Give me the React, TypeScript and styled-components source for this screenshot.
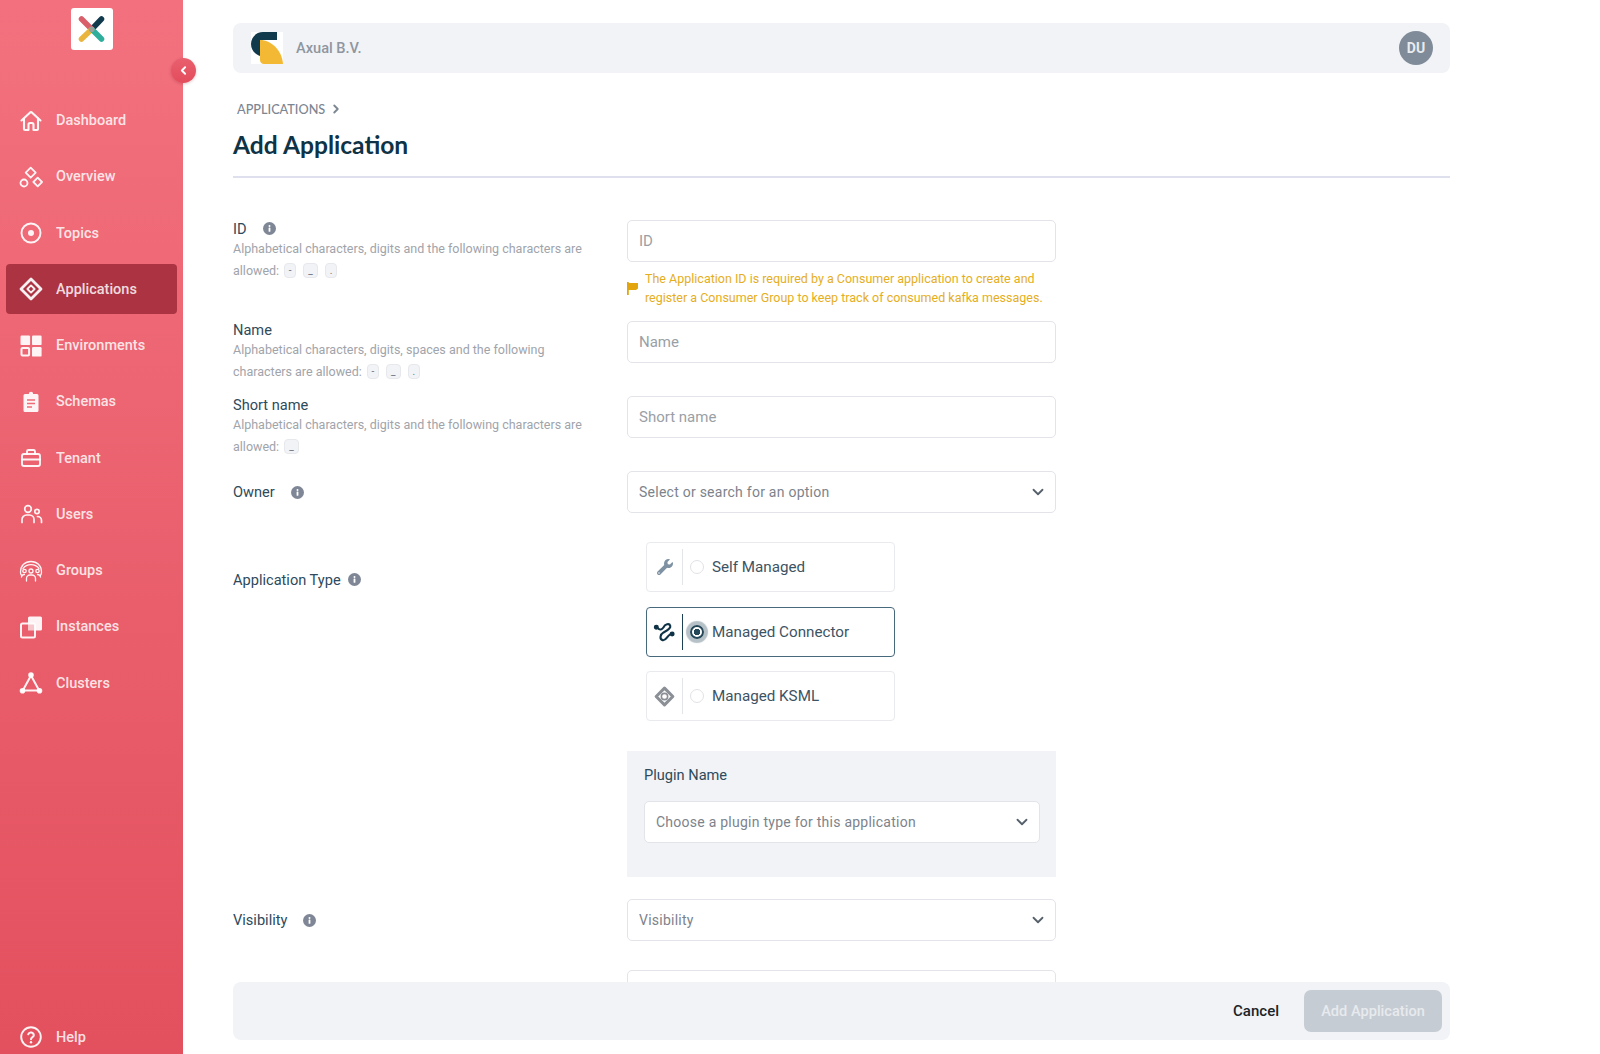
import React from "react";
import styled, { createGlobalStyle } from "styled-components";
import { ChevronDown, ChevronLeft, ChevronRight } from "lucide-react";
import { FaWrench } from "react-icons/fa";

const strokeProps = {
  fill: "none",
  stroke: "currentColor",
  strokeWidth: 1.9,
  strokeLinecap: "round" as const,
  strokeLinejoin: "round" as const,
};

const navIcons: Record<string, React.ReactNode> = {
  Dashboard: (
    <g {...strokeProps} strokeWidth={2.1}>
      <path d="M2.5 11.5 10.6 3.9a2 2 0 0 1 2.8 0l8.1 7.6" />
      <path d="M5 9.500V20a1 1 0 0 0 1 1h3.500v-5.500a1.500 1.500 0 0 1 1.500-1.500h2a1.500 1.500 0 0 1 1.500 1.500V21H18a1 1 0 0 0 1-1V9.500" />
    </g>
  ),
  Overview: (
    <g {...strokeProps} strokeWidth={1.8}>
      <path d="m11.700 2.700 5 5-5 5-5-5z" />
      <circle cx="5" cy="18" r="3.500" />
      <path d="m18.700 12.700 4.300 4.300-4.300 4.300-4.300-4.300z" />
    </g>
  ),
  Topics: (
    <g>
      <circle cx="12" cy="12" r="9.500" {...strokeProps} />
      <circle cx="12" cy="12" r="3" fill="currentColor" />
    </g>
  ),
  Applications: (
    <g {...strokeProps} strokeWidth={2.8}>
      <path d="M12 2 22 12 12 22 2 12z" />
      <path d="m12 8.400 3.600 3.600-3.600 3.600L8.400 12z" strokeWidth={1.9} />
    </g>
  ),
  Environments: (
    <g fill="currentColor">
      <rect x="1.500" y="1.500" width="9.600" height="9.600" rx="1.200" />
      <rect x="13" y="1.500" width="9.600" height="9.600" rx="1.200" />
      <rect x="2.500" y="14" width="7.600" height="7.600" rx="1" fill="none" stroke="currentColor" strokeWidth={2} />
      <rect x="13" y="13" width="9.600" height="9.600" rx="1.200" />
    </g>
  ),
  Schemas: (
    <g>
      <path
        fill="currentColor"
        d="M9.800 4a2.200 2.200 0 0 1 4.400 0H18a1.500 1.500 0 0 1 1.500 1.500v15A1.500 1.500 0 0 1 18 22H6a1.500 1.500 0 0 1-1.500-1.500v-15A1.500 1.500 0 0 1 6 4z"
      />
      <path d="M8 10h8M8 13.500h8M8 17h5" stroke="#ee6a77" strokeWidth={1.500} />
    </g>
  ),
  Tenant: (
    <g {...strokeProps}>
      <rect x="3" y="8" width="18" height="12" rx="2" />
      <path d="M8 8V5.500A1.500 1.500 0 0 1 9.500 4h5A1.500 1.500 0 0 1 16 5.500V8M3 13.500h18M10 13.500h4" />
    </g>
  ),
  Users: (
    <g {...strokeProps} strokeWidth={1.7}>
      <circle cx="9" cy="7" r="3.300" />
      <path d="M3 20.500v-3a4.500 4.500 0 0 1 4.500-4.500h3a4.500 4.500 0 0 1 4.500 4.500v3" />
      <circle cx="18" cy="9.500" r="2.200" />
      <path d="M18.500 14.500a4 4 0 0 1 4 4v2" />
    </g>
  ),
  Groups: (
    <g {...strokeProps} strokeWidth={1.300}>
      <path d="M1.500 13C1.500 6.500 6 2.500 12 2.500S22.500 6.500 22.500 13a5 5 0 0 1-1 3.300M2.500 16.300a5 5 0 0 1-1-3.300" />
      <path d="M4 9.500c2-2.600 4.700-3.800 8-3.800s6 1.200 8 3.800" />
      <circle cx="12" cy="12" r="2" />
      <circle cx="5.500" cy="12" r="1.700" />
      <circle cx="18.500" cy="12" r="1.700" />
      <path d="M7.500 22v-2.500a3.500 3.500 0 0 1 3.500-3.500h2a3.500 3.500 0 0 1 3.500 3.500V22M2.500 18a3 3 0 0 1 3-2.500M21.500 18a3 3 0 0 0-3-2.500" />
    </g>
  ),
  Instances: (
    <g>
      <rect x="9" y="1.500" width="14" height="14" rx="1.500" fill="currentColor" />
      <rect x="2" y="8.500" width="14" height="14" rx="1.500" fill="#ea5f6d" stroke="currentColor" strokeWidth={2} />
      <rect x="9" y="8.500" width="7" height="7" fill="currentColor" opacity={0.7} />
    </g>
  ),
  Clusters: (
    <g {...strokeProps} strokeWidth={2}>
      <path d="M12 4.500 3.800 19.500h16.400z" />
      <circle cx="12" cy="4" r="1.800" fill="currentColor" />
      <circle cx="3.500" cy="19.800" r="1.800" fill="currentColor" />
      <circle cx="20.500" cy="19.800" r="1.800" fill="currentColor" />
    </g>
  ),
  Help: (
    <g>
      <circle cx="12" cy="12" r="9.800" {...strokeProps} />
      <path d="M9.200 9.300a2.900 2.900 0 0 1 5.600.9c0 1.900-2.800 2.300-2.800 4" {...strokeProps} strokeWidth={2} />
      <circle cx="12" cy="17.200" r="1.200" fill="currentColor" />
    </g>
  ),
};

const navItems = [
  "Dashboard",
  "Overview",
  "Topics",
  "Applications",
  "Environments",
  "Schemas",
  "Tenant",
  "Users",
  "Groups",
  "Instances",
  "Clusters",
];

const InfoIcon = ({ tight }: { tight?: boolean }) => (
  <InfoDot $tight={tight}>
    <svg viewBox="0 0 13 13" width="13" height="13">
      <circle cx="6.500" cy="6.500" r="6.500" fill="#7f8796" />
      <circle cx="6.500" cy="3.900" r="1" fill="#fff" />
      <rect x="5.600" y="5.600" width="1.800" height="4.200" rx="0.500" fill="#fff" />
    </svg>
  </InfoDot>
);

const Hint = ({ first, last, chips }: { first: string; last: string; chips: string[] }) => (
  <>
    <HintLine>{first}</HintLine>
    <HintLine>
      {last}
      {chips.map((chip) => (
        <Chip key={chip} $wide={chip === "_"}>
          {chip}
        </Chip>
      ))}
    </HintLine>
  </>
);

const SelectBox = ({ text }: { text: string }) => (
  <Select>
    <span>{text}</span>
    <ChevronDown size={18} strokeWidth={2.4} color="#55606b" />
  </Select>
);

const App = () => {
  return (
    <Page>
      <GlobalStyle />
      <Sidebar>
        <LogoBox>
          <svg viewBox="0 0 42 42" width="42" height="42">
            <g strokeWidth="5.500" strokeLinecap="round">
              <line x1="30.500" y1="11" x2="21" y2="21" stroke="#123a4d" />
              <line x1="10.500" y1="11" x2="20.500" y2="21" stroke="#d95f6a" />
              <line x1="10.500" y1="31" x2="20" y2="22" stroke="#eab53f" />
              <line x1="30.500" y1="31" x2="21.500" y2="22" stroke="#2fae9c" />
            </g>
            <circle cx="20.700" cy="21.200" r="2.800" fill="#9a9f98" />
          </svg>
        </LogoBox>
        <Collapse>
          <ChevronLeft size={13} strokeWidth={3.5} color="#fff" />
        </Collapse>
        <Nav>
          {navItems.map((item) => (
            <NavItem key={item} $active={item === "Applications"}>
              <NavIcon viewBox="0 0 24 24">{navIcons[item]}</NavIcon>
              {item}
            </NavItem>
          ))}
        </Nav>
        <HelpItem>
          <NavIcon viewBox="0 0 24 24">{navIcons.Help}</NavIcon>
          Help
        </HelpItem>
      </Sidebar>

      <Main>
        <TopBar>
          <OrgLogo viewBox="0 0 32 32">
            <rect width="32" height="32" fill="#fff" />
            <path d="M26 0H12C5 0 0 5.500 0 12c0 5.500 3.500 10 9 12V8h17z" fill="#123a4d" />
            <path d="M9 8c11 0 22 10 23 24H13c-2.500 0-4-2-4-4z" fill="#f3b935" />
          </OrgLogo>
          <OrgName>Axual B.V.</OrgName>
          <Avatar>DU</Avatar>
        </TopBar>

        <Breadcrumb>
          APPLICATIONS
          <ChevronRight size={14} strokeWidth={3.2} color="#7c8692" />
        </Breadcrumb>
        <Title>Add Application</Title>
        <Divider />

        <FormRow $height={101}>
          <div>
            <Label>
              ID <InfoIcon />
            </Label>
            <Hint
              first="Alphabetical characters, digits and the following characters are"
              last="allowed:"
              chips={["-", "_", "."]}
            />
          </div>
          <div>
            <TextInput>ID</TextInput>
            <Warning>
              <svg viewBox="0 0 11 13" width="11" height="13">
                <path d="M0 0h1.800v13H0zM1.800 1H11v5.500l-2 1.500H1.800z" fill="#e2a50e" />
              </svg>
              <span>
                The Application ID is required by a Consumer application to create and register a Consumer Group to keep
                track of consumed kafka messages.
              </span>
            </Warning>
          </div>
        </FormRow>

        <FormRow $height={75}>
          <div>
            <Label>Name</Label>
            <Hint
              first="Alphabetical characters, digits, spaces and the following"
              last="characters are allowed:"
              chips={["-", "_", "."]}
            />
          </div>
          <TextInput>Name</TextInput>
        </FormRow>

        <FormRow $height={75}>
          <div>
            <Label>Short name</Label>
            <Hint
              first="Alphabetical characters, digits and the following characters are"
              last="allowed:"
              chips={["_"]}
            />
          </div>
          <TextInput>Short name</TextInput>
        </FormRow>

        <FormRow $height={71}>
          <CenteredLabel>
            Owner <InfoIcon />
          </CenteredLabel>
          <SelectBox text="Select or search for an option" />
        </FormRow>

        <FormRow $height={209}>
          <TypeLabel>
            Application Type <InfoIcon tight />
          </TypeLabel>
          <TypeList>
            <TypeCard>
              <TypeIcon>
                <FaWrench size={16} color="#7e92a3" />
              </TypeIcon>
              <Radio />
              Self Managed
            </TypeCard>
            <TypeCard $selected>
              <TypeIcon $selected>
                <svg viewBox="0 0 24 24" width="23" height="23" fill="none" stroke="#0f3346" strokeWidth="2.200" strokeLinecap="round">
                  <path d="M5 8.500C7 11 9.500 10 11 7.500 12.500 4.500 17 3 18 6 19 9 14 11.500 11 13 7.500 15 6.500 20 10 21 14 22 14.500 16.500 18 15" />
                  <circle cx="3.500" cy="7.500" r="1.500" fill="#0f3346" />
                  <circle cx="20" cy="14.500" r="1.500" fill="#0f3346" />
                </svg>
              </TypeIcon>
              <Radio $selected />
              Managed Connector
            </TypeCard>
            <TypeCard>
              <TypeIcon>
                <svg viewBox="0 0 24 24" width="21" height="21" fill="none" stroke="#8b8f96">
                  <path d="M12 2.500 21.500 12 12 21.500 2.500 12z" strokeWidth="3.500" strokeLinejoin="round" />
                  <circle cx="12" cy="12" r="3.600" strokeWidth="1.800" />
                </svg>
              </TypeIcon>
              <Radio />
              Managed KSML
            </TypeCard>
          </TypeList>
        </FormRow>

        <FormRow $height={148}>
          <span />
          <PluginPanel>
            <PanelLabel>Plugin Name</PanelLabel>
            <SelectBox text="Choose a plugin type for this application" />
          </PluginPanel>
        </FormRow>

        <FormRow $height={71}>
          <CenteredLabel>
            Visibility <InfoIcon />
          </CenteredLabel>
          <SelectBox text="Visibility" />
        </FormRow>

        <FormRow $height={42}>
          <span />
          <TextInput />
        </FormRow>

        <Footer>
          <CancelButton>Cancel</CancelButton>
          <SubmitButton disabled>Add Application</SubmitButton>
        </Footer>
      </Main>
    </Page>
  );
};

export default App;

const GlobalStyle = createGlobalStyle`
  html, body {
    margin: 0;
    padding: 0;
    height: 100%;
    overflow: hidden;
    background: #ffffff;
  }
  body {
    font-family: Roboto, "Liberation Sans", sans-serif;
  }
`;

const Page = styled.div`
  display: flex;
  height: 1054px;
  overflow: hidden;
`;

const Sidebar = styled.aside`
  position: relative;
  display: flex;
  flex-direction: column;
  flex: 0 0 183px;
  padding-bottom: 2px;
  box-sizing: border-box;
  background: linear-gradient(180deg, #f3717e 0%, #e3505e 100%);
  color: rgba(255, 255, 255, 0.84);
`;

const LogoBox = styled.div`
  align-self: center;
  width: 42px;
  height: 42px;
  margin-top: 8px;
  border-radius: 3px;
  background: #ffffff;
`;

const Collapse = styled.div`
  position: absolute;
  top: 58px;
  right: -13px;
  display: flex;
  align-items: center;
  justify-content: center;
  width: 25px;
  height: 25px;
  border-radius: 50%;
  background: linear-gradient(180deg, #e9606e, #e34c5c);
  box-shadow: 0 1px 3px rgba(120, 30, 40, 0.25);
`;

const Nav = styled.nav`
  display: flex;
  flex-direction: column;
  gap: 6.250px;
  margin-top: 45.500px;
  padding: 0 6px;
`;

const NavItem = styled.div<{ $active?: boolean }>`
  display: flex;
  align-items: center;
  gap: 13px;
  height: 50px;
  padding-left: 13px;
  border-radius: 4px;
  font-size: 14.500px;
  font-weight: 500;
  background: ${(p) => (p.$active ? "#ab3342" : "transparent")};
`;

const HelpItem = styled(NavItem)`
  margin: auto 6px 0;
  height: 30px;
`;

const NavIcon = styled.svg`
  flex: none;
  width: 24px;
  height: 24px;
  color: rgba(255, 255, 255, 0.93);
`;

const Main = styled.main`
  position: relative;
  flex: 0 0 1217px;
  margin-left: 50px;
  padding-top: 23px;
  box-sizing: border-box;
`;

const TopBar = styled.header`
  display: flex;
  align-items: center;
  height: 50px;
  padding: 0 17px 0 18px;
  border-radius: 8px;
  background: #f1f3f6;
`;

const OrgLogo = styled.svg`
  width: 32px;
  height: 32px;
`;

const OrgName = styled.span`
  margin-left: 13px;
  font-size: 14.600px;
  font-weight: 500;
  color: #8f96a0;
`;

const Avatar = styled.div`
  display: flex;
  align-items: center;
  justify-content: center;
  width: 34px;
  height: 34px;
  margin-left: auto;
  border-radius: 50%;
  font-size: 14px;
  font-weight: 700;
  color: #e8ecf0;
  background: #7f8b98;
`;

const Breadcrumb = styled.div`
  display: flex;
  align-items: center;
  gap: 4px;
  height: 18px;
  margin: 27px 0 0 4px;
  font-family: Lato, sans-serif;
  font-size: 12.700px;
  font-weight: 500;
  color: #7c8692;
`;

const Title = styled.h1`
  margin: 9px 0 0;
  font-family: Lato, sans-serif;
  font-size: 24.600px;
  line-height: 36px;
  font-weight: 700;
  color: #0f3346;
`;

const Divider = styled.div`
  height: 2px;
  margin: 13px 0 42px;
  background: #dfe0ee;
`;

const FormRow = styled.section<{ $height: number }>`
  display: grid;
  grid-template-columns: 394px 429px;
  height: ${(p) => p.$height}px;
`;

const Label = styled.div`
  display: flex;
  align-items: center;
  height: 17px;
  font-size: 14.600px;
  color: #2e4a5b;
`;

const CenteredLabel = styled(Label)`
  height: 42px;
`;

const TypeLabel = styled(Label)`
  margin-top: 29px;
`;

const InfoDot = styled.span<{ $tight?: boolean }>`
  display: inline-flex;
  margin-left: ${(p) => (p.$tight ? 7 : 16)}px;
`;

const HintLine = styled.div`
  display: flex;
  align-items: center;
  height: 22px;
  font-size: 12.500px;
  color: #9fa4ab;
`;

const Chip = styled.span<{ $wide?: boolean }>`
  width: ${(p) => (p.$wide ? 15 : 12)}px;
  height: 15px;
  margin-left: 5px;
  margin-right: 2px;
  border: 1px solid #e6e8ec;
  border-radius: 4px;
  box-sizing: border-box;
  font-size: 10px;
  line-height: 13px;
  text-align: center;
  color: #6f7680;
  background: #f2f3f6;
`;

const TextInput = styled.div`
  height: 42px;
  padding: 0 11px;
  border: 1px solid #e2e4e9;
  border-radius: 5px;
  box-sizing: border-box;
  font-size: 15px;
  line-height: 40px;
  color: #9a9fa6;
  background: #ffffff;
`;

const Select = styled(TextInput)`
  display: flex;
  align-items: center;
  justify-content: space-between;
  padding-right: 8px;
  font-size: 14px;
  letter-spacing: 0.25px;
  color: #7d838b;
`;

const Warning = styled.div`
  display: flex;
  align-items: center;
  gap: 7px;
  margin-top: 7px;
  font-size: 12.500px;
  line-height: 19px;
  color: #e5ae1c;

  svg {
    flex: none;
  }
`;

const TypeList = styled.div`
  display: flex;
  flex-direction: column;
  gap: 14.500px;
  margin-left: 19px;
  width: 249px;
`;

const TypeCard = styled.div<{ $selected?: boolean }>`
  display: flex;
  align-items: center;
  height: 50px;
  border: 1px solid ${(p) => (p.$selected ? "#47697c" : "#e8eaee")};
  border-radius: 4px;
  box-sizing: border-box;
  font-size: 15.200px;
  color: #3d5364;
`;

const TypeIcon = styled.div<{ $selected?: boolean }>`
  display: flex;
  align-items: center;
  justify-content: center;
  width: 35px;
  height: 36px;
  border-right: 1px solid ${(p) => (p.$selected ? "#1d4154" : "#e3e5e9")};
`;

const Radio = styled.span<{ $selected?: boolean }>`
  width: 14px;
  height: 14px;
  margin: 0 8px 0 7px;
  border-radius: 50%;
  box-sizing: border-box;
  border: ${(p) => (p.$selected ? "2px solid #24475a" : "1px solid #e0e2e6")};
  background: ${(p) => (p.$selected ? "radial-gradient(circle, #24475a 0 3px, #ffffff 3.500px)" : "#ffffff")};
  box-shadow: ${(p) => (p.$selected ? "0 0 1px 4px #b5c0c7" : "none")};
`;

const PluginPanel = styled.div`
  height: 126px;
  padding: 16px 16px 0 17px;
  box-sizing: border-box;
  background: #f1f3f6;
`;

const PanelLabel = styled.div`
  margin-bottom: 17px;
  font-size: 14.600px;
  line-height: 17px;
  color: #2e4a5b;
`;

const Footer = styled.footer`
  position: absolute;
  left: 0;
  right: 0;
  top: 982px;
  display: flex;
  align-items: center;
  justify-content: flex-end;
  gap: 25px;
  height: 58px;
  padding-right: 8px;
  border-radius: 8px;
  box-sizing: border-box;
  background: #f1f3f6;
`;

const CancelButton = styled.button`
  border: 0;
  padding: 0;
  font-family: inherit;
  font-size: 15px;
  font-weight: 500;
  color: #1c2328;
  background: none;
`;

const SubmitButton = styled.button`
  width: 138px;
  height: 42px;
  border: 0;
  border-radius: 7px;
  font-family: inherit;
  font-size: 14.600px;
  font-weight: 500;
  color: #e7eaee;
  background: #c6ccd3;
`;
